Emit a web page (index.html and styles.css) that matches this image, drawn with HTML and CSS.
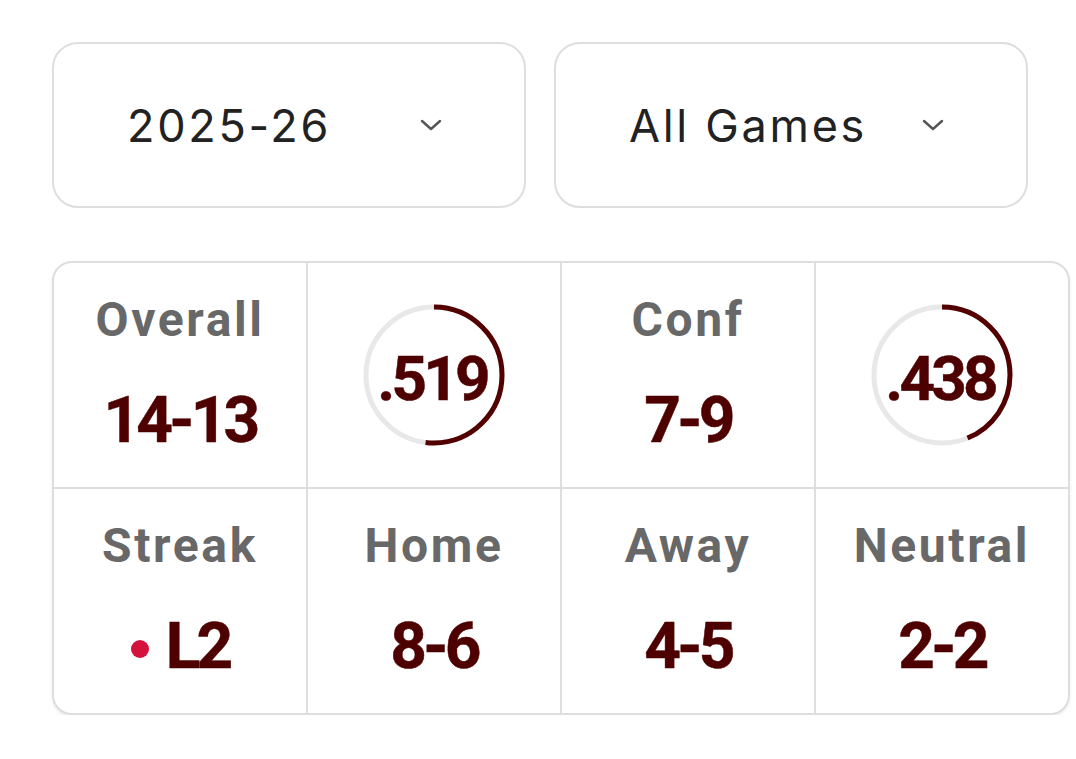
FILE: index.html
```html
<!DOCTYPE html>
<html>
<head>
<meta charset="utf-8">
<link rel="stylesheet" href="styles.css">
</head>
<body>
<div class="page">
  <div class="filters">
    <div class="select">
      <span class="select-text">2025-26</span>
      <svg class="chev" width="22" height="12" viewBox="0 0 22 12"><path d="M2 2 L11 10 L20 2" fill="none" stroke="#555" stroke-width="2.4" stroke-linecap="round" stroke-linejoin="round"/></svg>
    </div>
    <div class="select">
      <span class="select-text">All Games</span>
      <svg class="chev" width="22" height="12" viewBox="0 0 22 12"><path d="M2 2 L11 10 L20 2" fill="none" stroke="#555" stroke-width="2.4" stroke-linecap="round" stroke-linejoin="round"/></svg>
    </div>
  </div>

  <div class="stats">
    <div class="cell">
      <div class="label">Overall</div>
      <div class="value">14-13</div>
    </div>
    <div class="cell center">
      <div class="ring">
        <svg width="144" height="144" viewBox="0 0 144 144">
          <circle cx="72" cy="72" r="68" fill="none" stroke="#e8e8e8" stroke-width="5"/>
          <circle cx="72" cy="72" r="68" fill="none" stroke="#520000" stroke-width="5" stroke-dasharray="221.8 427.3" transform="rotate(-90 72 72)"/>
        </svg>
        <span class="pct">.519</span>
      </div>
    </div>
    <div class="cell">
      <div class="label">Conf</div>
      <div class="value">7-9</div>
    </div>
    <div class="cell center">
      <div class="ring">
        <svg width="144" height="144" viewBox="0 0 144 144">
          <circle cx="72" cy="72" r="68" fill="none" stroke="#e8e8e8" stroke-width="5"/>
          <circle cx="72" cy="72" r="68" fill="none" stroke="#520000" stroke-width="5" stroke-dasharray="187.2 427.3" transform="rotate(-90 72 72)"/>
        </svg>
        <span class="pct">.438</span>
      </div>
    </div>
    <div class="cell">
      <div class="label">Streak</div>
      <div class="value streak"><span class="dot"></span>L2</div>
    </div>
    <div class="cell">
      <div class="label">Home</div>
      <div class="value">8-6</div>
    </div>
    <div class="cell">
      <div class="label">Away</div>
      <div class="value">4-5</div>
    </div>
    <div class="cell">
      <div class="label">Neutral</div>
      <div class="value">2-2</div>
    </div>
  </div>
</div>
</body>
</html>
```

FILE: styles.css
```css
html, body {
  margin: 0;
  padding: 0;
  background: #ffffff;
}

.page {
  padding: 42px 0 0 52px;
  width: 1018px;
  font-family: Roboto, "Liberation Sans", sans-serif;
}

.filters {
  display: flex;
  gap: 28px;
  width: 976px;
}

.select {
  box-sizing: border-box;
  width: 474px;
  height: 166px;
  border: 2px solid #dedede;
  border-radius: 26px;
  display: flex;
  align-items: center;
  justify-content: space-between;
  padding: 0 82px 0 73px;
}

.select-text {
  font-family: Inter, Roboto, sans-serif;
  font-weight: 400;
  font-size: 45px;
  letter-spacing: 2.7px;
  color: #222222;
}

.chev {
  display: block;
}

.stats {
  margin-top: 53px;
  box-sizing: border-box;
  width: 1018px;
  height: 454px;
  border: 2px solid #dedede;
  border-radius: 20px;
  background: #dedede;
  overflow: hidden;
  display: grid;
  grid-template-columns: repeat(4, 1fr);
  grid-template-rows: repeat(2, 1fr);
  gap: 2px;
  box-shadow: 0 2px 3px rgba(0, 0, 0, 0.08);
}

.cell {
  background: #ffffff;
  display: flex;
  flex-direction: column;
  align-items: center;
  padding-top: 29px;
}

.cell.center {
  padding-top: 0;
  justify-content: center;
}

.label {
  font-weight: 700;
  font-size: 48px;
  line-height: 56px;
  letter-spacing: 2.6px;
  color: #686868;
}

.value {
  margin-top: 35px;
  font-weight: 700;
  font-size: 64px;
  line-height: 76px;
  letter-spacing: -3.8px;
  color: #4e0000;
  -webkit-text-stroke: 0.5px #4e0000;
}

.streak {
  display: flex;
  align-items: center;
  gap: 17px;
}

.dot {
  width: 18px;
  height: 18px;
  border-radius: 50%;
  background: #d4123c;
  margin-top: 4px;
}

.ring {
  display: grid;
  place-items: center;
  width: 144px;
  height: 144px;
}

.ring svg,
.ring .pct {
  grid-area: 1 / 1;
}

.ring svg {
  display: block;
}

.pct {
  font-weight: 700;
  font-size: 62px;
  letter-spacing: -3.8px;
  color: #4e0000;
  -webkit-text-stroke: 0.5px #4e0000;
  margin-top: 6px;
  margin-left: -4px;
}
```
